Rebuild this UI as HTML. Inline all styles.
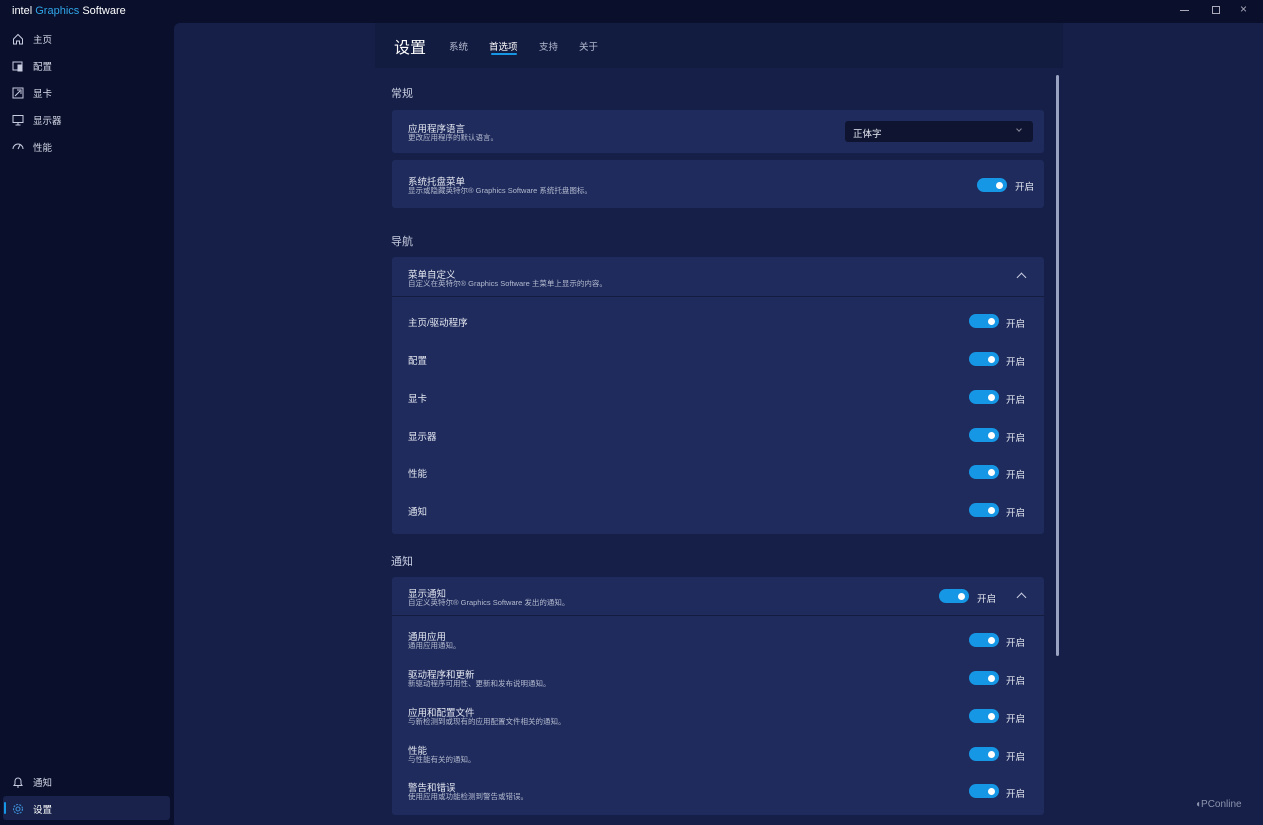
<!DOCTYPE html>
<html><head><meta charset="utf-8">
<style>
*{margin:0;padding:0;box-sizing:border-box}
body{width:1263px;height:825px;background:#0a0f2c;font-family:"Liberation Sans","Noto Sans CJK SC",sans-serif;color:#e6e9f2;position:relative;overflow:hidden}
.a{position:absolute}
.t{font-size:9.5px;white-space:nowrap}
.s{font-size:7.5px;color:#b4bbd0;white-space:nowrap}
.nav{position:absolute;left:12px;font-size:9.5px;color:#d8dcea;display:flex;align-items:center}
.nav svg{width:12px;height:12px;margin-right:9px}
.card{position:absolute;left:392px;width:652px;background:#1f2b5c;border-radius:3px}
.tg{position:absolute;width:30px;height:14px;border-radius:7px;background:#1597e5}
.tg:after{content:"";position:absolute;right:4px;top:3.5px;width:7px;height:7px;border-radius:50%;background:#fff}
.on{position:absolute;font-size:9.5px;color:#e6e9f2}
.chev{position:absolute;width:7px;height:7px;border-left:1.3px solid #c8cde0;border-top:1.3px solid #c8cde0;transform:rotate(45deg)}
</style></head><body>
<div class="a" style="left:12px;top:5px;font-size:11px;color:#fff">intel <span style="color:#2fa6e8">Graphics</span> Software</div>
<div class="a" style="left:1180px;top:10px;width:9px;height:1px;background:#aab"></div>
<div class="a" style="left:1212px;top:6px;width:8px;height:8px;border:1px solid #aab"></div>
<div class="a" style="left:1240px;top:2px;font-size:12px;color:#aab">×</div>

<div class="a" style="left:174px;top:23px;width:1089px;height:802px;background:#151f48;border-top-left-radius:6px"></div>
<div class="a" style="left:375px;top:23px;width:688px;height:45px;background:#121b40"></div>

<div class="nav" style="top:32px"><svg viewBox="0 0 12 12" fill="none" stroke="#c8cde0" stroke-width="1"><path d="M1.5 6 6 1.5 10.5 6V11H7.5V8H4.5V11H1.5Z"/></svg>主页</div>
<div class="nav" style="top:59px"><svg viewBox="0 0 12 12" fill="none" stroke="#c8cde0" stroke-width="1"><rect x="1" y="2" width="9" height="8"/><rect x="6" y="5" width="4" height="6" fill="#c8cde0"/></svg>配置</div>
<div class="nav" style="top:86px"><svg viewBox="0 0 12 12" fill="none" stroke="#c8cde0" stroke-width="1"><rect x="1" y="1" width="10" height="10"/><path d="M3 9 8 4M5 3h4v4"/></svg>显卡</div>
<div class="nav" style="top:113px"><svg viewBox="0 0 12 12" fill="none" stroke="#c8cde0" stroke-width="1"><rect x="1" y="1.5" width="10" height="7"/><path d="M6 8.5V11M3.5 11h5"/></svg>显示器</div>
<div class="nav" style="top:140px"><svg viewBox="0 0 12 12" fill="none" stroke="#c8cde0" stroke-width="1"><path d="M1 8A5 5 0 0 1 11 8M6 8 8 4"/></svg>性能</div>
<div class="nav" style="top:775px"><svg viewBox="0 0 12 12" fill="none" stroke="#c8cde0" stroke-width="1"><path d="M3 8V5a3 3 0 0 1 6 0v3l1 1.5H2ZM5 11h2"/></svg>通知</div>
<div class="a" style="left:3px;top:796px;width:167px;height:24px;background:#18224a;border-radius:3px"></div>
<div class="a" style="left:4px;top:802px;width:2px;height:12px;background:#1597e5;border-radius:1px"></div>
<div class="nav" style="top:802px;color:#fff"><svg viewBox="0 0 12 12" fill="none" stroke="#3e8fd8" stroke-width="1.1"><circle cx="6" cy="6" r="2"/><circle cx="6" cy="6" r="4.5" stroke-dasharray="2 1.2"/></svg>设置</div>

<div class="a" style="left:394px;top:34px;font-size:16px;color:#fff">设置</div>
<div class="a t" style="left:449px;top:39px;color:#b4bbd0">系统</div>
<div class="a t" style="left:489px;top:39px;color:#fff">首选项</div>
<div class="a" style="left:491px;top:53px;width:26px;height:2px;background:#1597e5;border-radius:1px"></div>
<div class="a t" style="left:539px;top:39px;color:#b4bbd0">支持</div>
<div class="a t" style="left:579px;top:39px;color:#b4bbd0">关于</div>

<div class="a" style="left:1056px;top:75px;width:3px;height:581px;background:#9aa3c2;border-radius:2px"></div>

<div class="a" style="left:391px;top:85px;font-size:11px;color:#c8cde0">常规</div>
<div class="card" style="top:110px;height:43px">
<div class="a t" style="left:16px;top:11px">应用程序语言</div>
<div class="a s" style="left:16px;top:22px">更改应用程序的默认语言。</div>
<div class="a" style="left:453px;top:11px;width:188px;height:21px;background:#0f1530;border-radius:3px"><span class="a t" style="left:8px;top:5px">正体字</span><span class="a" style="left:172px;top:6px;width:4px;height:4px;border-right:1px solid #889;border-bottom:1px solid #889;transform:rotate(45deg)"></span></div>
</div>
<div class="card" style="top:160px;height:48px">
<div class="a t" style="left:16px;top:14px">系统托盘菜单</div>
<div class="a s" style="left:16px;top:25px">显示或隐藏英特尔® Graphics Software 系统托盘图标。</div>
<div class="tg" style="left:585px;top:18px"></div><div class="on" style="left:623px;top:19px">开启</div>
</div>

<div class="a" style="left:391px;top:233px;font-size:11px;color:#c8cde0">导航</div>
<div class="card" style="top:257px;height:277px">
<div class="a t" style="left:16px;top:10px">菜单自定义</div>
<div class="a s" style="left:16px;top:21px">自定义在英特尔® Graphics Software 主菜单上显示的内容。</div>
<div class="chev" style="left:626px;top:17px"></div>
<div class="a" style="left:0;top:39px;width:652px;height:1px;background:#141c40"></div>
</div>

<div class="a" style="left:391px;top:553px;font-size:11px;color:#c8cde0">通知</div>
<div class="card" style="top:577px;height:238px">
<div class="a t" style="left:16px;top:9px">显示通知</div>
<div class="a s" style="left:16px;top:20px">自定义英特尔® Graphics Software 发出的通知。</div>
<div class="tg" style="left:547px;top:12px"></div><div class="on" style="left:585px;top:14px">开启</div>
<div class="chev" style="left:626px;top:17px"></div>
<div class="a" style="left:0;top:38px;width:652px;height:1px;background:#141c40"></div>
</div>

<div id="rows"></div>
<script>
var r=[["主页/驱动程序",321],["配置",359],["显卡",397],["显示器",435],["性能",472],["通知",510]];
var n=[["通用应用","通用应用通知。",640],["驱动程序和更新","新驱动程序可用性、更新和发布说明通知。",678],["应用和配置文件","与新检测到或现有的应用配置文件相关的通知。",716],["性能","与性能有关的通知。",754],["警告和错误","使用应用或功能检测到警告或错误。",791]];
var h="";
r.forEach(function(x){h+='<div class="a t" style="left:408px;top:'+(x[1]-6)+'px">'+x[0]+'</div><div class="tg" style="left:969px;top:'+(x[1]-7)+'px"></div><div class="on" style="left:1006px;top:'+(x[1]-5)+'px">开启</div>';});
n.forEach(function(x){h+='<div class="a t" style="left:408px;top:'+(x[2]-11)+'px">'+x[0]+'</div><div class="a s" style="left:408px;top:'+(x[2]+0)+'px">'+x[1]+'</div><div class="tg" style="left:969px;top:'+(x[2]-7)+'px"></div><div class="on" style="left:1006px;top:'+(x[2]-5)+'px">开启</div>';});
document.getElementById("rows").innerHTML=h;
</script>
<div class="a" style="left:1195px;top:799px;font-size:10px;color:#8d94ad">◖PConline</div>
</body></html>
